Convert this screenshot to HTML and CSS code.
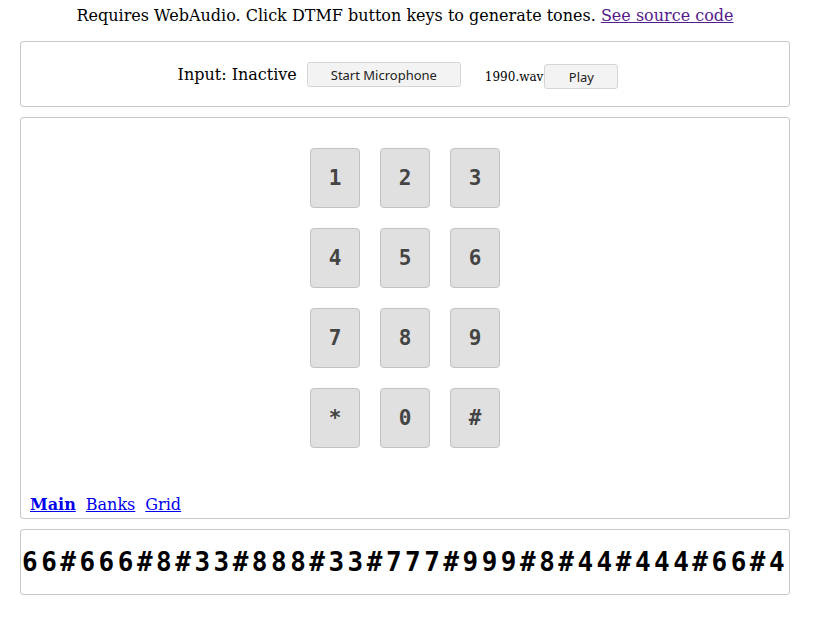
FILE: index.html
```html
<!DOCTYPE html>
<html>
<head>
<meta charset="utf-8">
<link rel="stylesheet" href="styles.css">
</head>
<body>
<div class="page">
  <p class="intro">Requires WebAudio. Click DTMF button keys to generate tones. <a class="visited" href="#">See source code</a></p>
  <div class="panel controls">
    <span class="status">Input: Inactive</span>
    <button class="btn mic">Start Microphone</button>
    <span class="file">1990.wav</span><button class="btn play">Play</button>
  </div>
  <div class="panel pad">
    <div class="keys">
      <button class="key">1</button><button class="key">2</button><button class="key">3</button>
      <button class="key">4</button><button class="key">5</button><button class="key">6</button>
      <button class="key">7</button><button class="key">8</button><button class="key">9</button>
      <button class="key">*</button><button class="key">0</button><button class="key">#</button>
    </div>
    <nav class="tabs"><a href="#" class="active">Main</a><a href="#">Banks</a><a href="#">Grid</a></nav>
  </div>
  <div class="panel output">66#666#8#33#888#33#777#999#8#44#444#66#4</div>
</div>
</body>
</html>
```
FILE: styles.css
```css
html, body { margin: 0; padding: 0; background: #fff; }
body { font-family: "DejaVu Serif", serif; font-size: 16px; color: #000; }
.page { width: 770px; margin-left: 20px; }
.intro { margin: 0; padding-top: 6px; height: 41px; box-sizing: border-box; text-align: center; line-height: 19px; }
a { color: #0000ee; }
a.visited { color: #551a8b; }
.panel { border: 1px solid #c8c8c8; border-radius: 3px; box-sizing: border-box; }
.controls { height: 66px; display: flex; align-items: center; justify-content: center; padding-right: 14px; }
.status { font-size: 16px; margin-right: 10px; }
.btn { font-family: "Noto Sans", sans-serif; font-size: 13px; color: #222; background: #f3f3f3; border: 1px solid #d6d6d6; border-radius: 3px; height: 25px; padding: 0; }
.mic { width: 154px; margin-top: 1px; }
.file { font-size: 12px; margin-left: 24px; margin-top: 5px; }
.play { width: 74px; margin-left: 1px; margin-top: 5px; }
.pad { margin-top: 10px; height: 402px; padding-top: 30px; display: flex; flex-direction: column; align-items: center; }
.keys { display: grid; grid-template-columns: repeat(3, 50px); gap: 20px; }
.key { width: 50px; height: 60px; padding: 0; background: #e0e0e0; border: 1px solid #c2c2c2; border-radius: 4px; font-family: "DejaVu Sans Mono", monospace; font-weight: bold; font-size: 21px; color: #444; }
.tabs { align-self: flex-start; margin-top: 47px; padding-left: 9px; display: flex; gap: 10px; line-height: 20px; }
.tabs .active { font-weight: bold; }
.output { margin-top: 10px; height: 66px; padding-left: 1px; display: flex; align-items: center; overflow: hidden; white-space: nowrap; font-family: "DejaVu Sans Mono", monospace; font-weight: bold; font-size: 26px; letter-spacing: 3.5px; }
```
